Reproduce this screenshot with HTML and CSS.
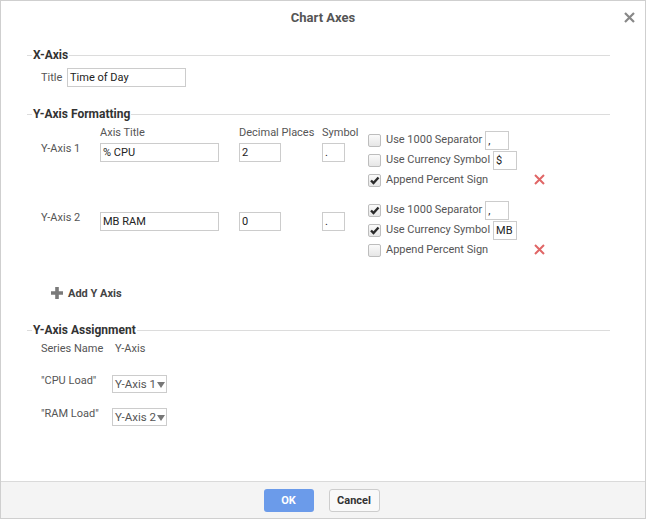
FILE: index.html
```html
<!DOCTYPE html>
<html>
<head>
<meta charset="utf-8">
<link rel="stylesheet" href="styles.css">
</head>
<body>
<div class="dialog">
  <div class="header">
    <span></span>
    <span class="title">Chart Axes</span>
    <span class="close"><svg width="11" height="11" viewBox="0 0 11 11"><path d="M1 1L10 10M10 1L1 10" stroke="#888" stroke-width="2.2" fill="none"/></svg></span>
  </div>
  <div class="body">
    <div class="legend"><span>X-Axis</span></div>
    <div class="xrow">
      <span class="lbl title-lbl">Title</span>
      <span class="in w-title">Time of Day</span>
    </div>

    <div class="legend yfmt"><span>Y-Axis Formatting</span></div>

    <div class="yblock first">
      <div class="ycols">
        <span></span>
        <span class="lbl hd">Axis Title</span>
        <span class="lbl hd">Decimal Places</span>
        <span class="lbl hd">Symbol</span>
        <span class="lbl rowlbl">Y-Axis 1</span>
        <span class="in w-title">% CPU</span>
        <span class="in w-dec">2</span>
        <span class="in w-sym">.</span>
      </div>
      <div class="checks">
        <div class="chk"><span class="box"></span><span class="lbl">Use 1000 Separator</span><span class="in w-small">,</span></div>
        <div class="chk"><span class="box"></span><span class="lbl">Use Currency Symbol</span><span class="in w-small">$</span></div>
        <div class="chk last"><span class="box on"><svg width="11" height="11" viewBox="0 0 11 11"><path d="M2 5.5L4.5 8L9.5 2.5" stroke="#2a2a2a" stroke-width="2.4" fill="none"/></svg></span><span class="lbl">Append Percent Sign</span><span class="del"><svg width="11" height="11" viewBox="0 0 11 11"><path d="M1 1L10 10M10 1L1 10" stroke="#e06666" stroke-width="2" fill="none"/></svg></span></div>
      </div>
    </div>

    <div class="yblock second">
      <div class="ycols">
        <span class="lbl rowlbl">Y-Axis 2</span>
        <span class="in w-title">MB RAM</span>
        <span class="in w-dec">0</span>
        <span class="in w-sym">.</span>
      </div>
      <div class="checks">
        <div class="chk"><span class="box on"><svg width="11" height="11" viewBox="0 0 11 11"><path d="M2 5.5L4.5 8L9.5 2.5" stroke="#2a2a2a" stroke-width="2.4" fill="none"/></svg></span><span class="lbl">Use 1000 Separator</span><span class="in w-small">,</span></div>
        <div class="chk"><span class="box on"><svg width="11" height="11" viewBox="0 0 11 11"><path d="M2 5.5L4.5 8L9.5 2.5" stroke="#2a2a2a" stroke-width="2.4" fill="none"/></svg></span><span class="lbl">Use Currency Symbol</span><span class="in w-small">MB</span></div>
        <div class="chk last"><span class="box"></span><span class="lbl">Append Percent Sign</span><span class="del"><svg width="11" height="11" viewBox="0 0 11 11"><path d="M1 1L10 10M10 1L1 10" stroke="#e06666" stroke-width="2" fill="none"/></svg></span></div>
      </div>
    </div>

    <div class="addrow">
      <svg width="14" height="14" viewBox="0 0 14 14"><path d="M7 1V13M1 7H13" stroke="#7a7a7a" stroke-width="3.6" fill="none"/></svg>
      <span class="addtxt">Add Y Axis</span>
    </div>

    <div class="legend assign"><span>Y-Axis Assignment</span></div>
    <div class="agrid">
      <span class="lbl">Series Name</span>
      <span class="lbl">Y-Axis</span>
    </div>
    <div class="arow">
      <span class="lbl">"CPU Load"</span>
      <span class="sel">Y-Axis 1</span>
    </div>
    <div class="arow">
      <span class="lbl">"RAM Load"</span>
      <span class="sel">Y-Axis 2</span>
    </div>
  </div>
  <div class="footer">
    <span class="btn ok">OK</span>
    <span class="btn cancel">Cancel</span>
  </div>
</div>
</body>
</html>
```

FILE: styles.css
```css
* { box-sizing: border-box; }
html, body { margin: 0; padding: 0; background: #fff; }
body {
  font-family: Roboto, "Liberation Sans", sans-serif;
  font-size: 11px;
  color: #555;
}
.dialog {
  width: 646px;
  height: 519px;
  border: 1px solid #cfcfcf;
  display: flex;
  flex-direction: column;
  background: #fff;
}
.header {
  height: 32px;
  display: grid;
  grid-template-columns: 1fr auto 1fr;
  align-items: center;
}
.title {
  font-size: 13px;
  font-weight: bold;
  color: #555;
  padding-top: 1px;
}
.close {
  justify-self: end;
  margin-right: 10px;
  display: flex;
  margin-top: 1px;
}
.body {
  flex: 1;
  padding: 15px 35px 0 26px;
}
.legend {
  display: flex;
  align-items: center;
  height: 14px;
  line-height: 14px;
}
.legend::before {
  content: "";
  width: 5px;
  border-top: 1px solid #dcdcdc;
}
.legend::after {
  content: "";
  flex: 1;
  border-top: 1px solid #dcdcdc;
}
.legend span {
  font-size: 12px;
  font-weight: bold;
  color: #333;
  padding: 0 1px;
}
.lbl { line-height: 14px; white-space: nowrap; }
.in {
  display: block;
  height: 19px;
  border: 1px solid #ccc;
  background: #fff;
  color: #222;
  line-height: 17px;
  padding: 0 2px;
  white-space: nowrap;
  overflow: hidden;
}
.w-title { width: 119px; }
.w-dec { width: 42px; }
.w-sym { width: 23px; }
.w-small { width: 24px; margin-left: 3px; }

.xrow {
  display: flex;
  align-items: center;
  margin-top: 6px;
  padding-left: 14px;
}
.title-lbl { width: 26px; }

.yfmt { margin-top: 20px; }
.yblock {
  display: flex;
  align-items: flex-start;
}
.yblock.first { margin-top: 5px; }
.yblock.second { margin-top: 10px; }
.ycols {
  display: grid;
  grid-template-columns: 59px 139px 83px 46px;
  row-gap: 3px;
  padding-left: 14px;
  width: 341px;
  align-items: start;
}
.second .ycols { padding-top: 12px; }
.rowlbl { margin-top: -1px; }
.first .checks { margin-top: 4px; }
.checks { width: 177px; }
.chk {
  display: flex;
  align-items: center;
  height: 20px;
}
.box {
  width: 13px;
  height: 13px;
  border: 1px solid #bdbdbd;
  border-radius: 2px;
  background: linear-gradient(#fafafa, #e6e6e6);
  margin-right: 5px;
  display: flex;
  align-items: center;
  justify-content: center;
  flex: none;
}
.chk .lbl { color: #555; }
.del {
  margin-left: auto;
  display: flex;
  margin-top: -1px;
}

.addrow {
  display: flex;
  align-items: center;
  margin-top: 25px;
  padding-left: 23px;
  height: 16px;
}
.addtxt {
  font-weight: bold;
  color: #444;
  margin-left: 4px;
}

.assign { margin-top: 22px; }
.agrid {
  display: grid;
  grid-template-columns: 74px auto;
  padding-left: 14px;
  margin-top: 5px;
}
.arow {
  display: flex;
  align-items: flex-start;
  padding-left: 14px;
  height: 33px;
}
.agrid + .arow { margin-top: 18px; }
.arow .lbl { width: 71px; }
.sel {
  margin-top: 1px;
  width: 55px;
  height: 18px;
  border: 1px solid #ccc;
  color: #555;
  line-height: 16px;
  padding-left: 2px;
  display: flex;
  align-items: center;
  white-space: nowrap;
  font-size: 11.5px;
}
.sel::after {
  content: "";
  margin-left: 1px;
  border-left: 4px solid transparent;
  border-right: 4px solid transparent;
  border-top: 6px solid #777;
  margin-top: 1px;
}

.footer {
  height: 37px;
  border-top: 1px solid #dadada;
  background: #f4f4f4;
  display: flex;
  justify-content: center;
  align-items: center;
  gap: 15px;
  padding-right: 3px;
}
.btn {
  height: 23px;
  line-height: 23px;
  border-radius: 3px;
  font-weight: bold;
  text-align: center;
  font-size: 11px;
}
.ok {
  width: 50px;
  background: #6b9bea;
  color: #fff;
}
.cancel {
  width: 51px;
  background: #f9f9f9;
  border: 1px solid #cdcdcd;
  line-height: 21px;
  color: #333;
}
```
